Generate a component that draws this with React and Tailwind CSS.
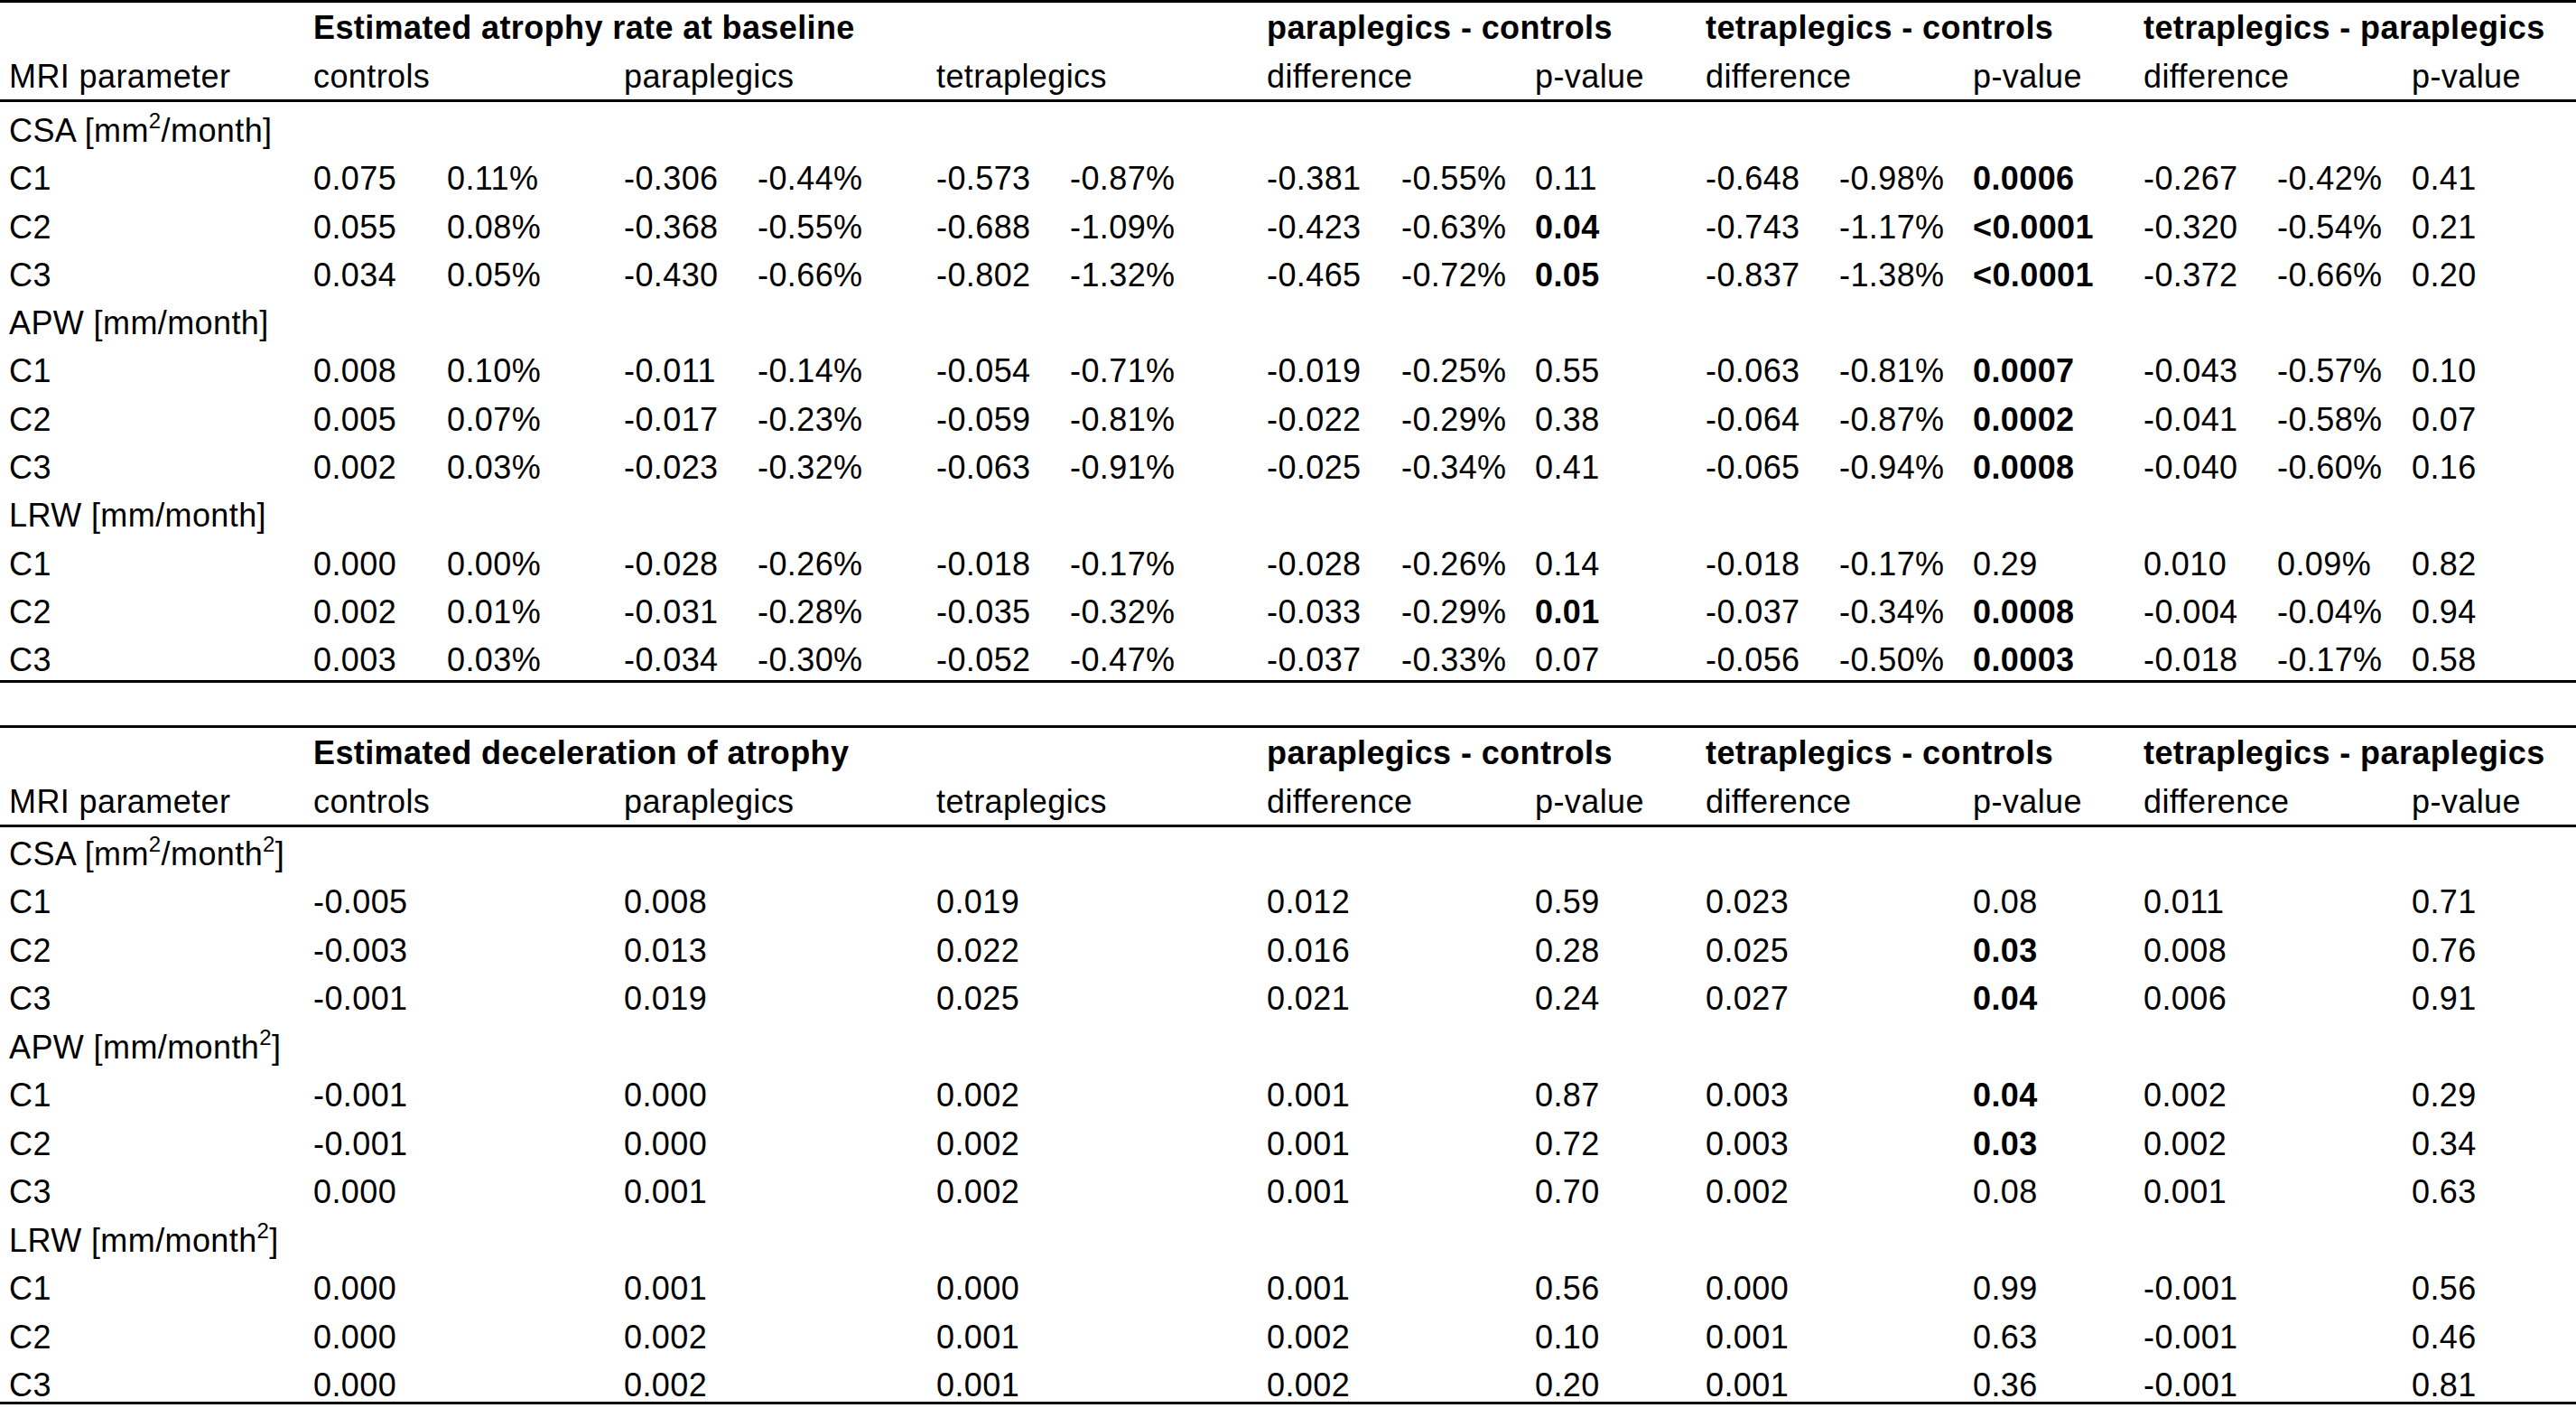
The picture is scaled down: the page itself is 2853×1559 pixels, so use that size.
import React from 'react';

// column grid shared by both tables: label + 15 value columns
const GRID =
  'grid grid-cols-[347px_148px_196px_148px_198px_148px_218px_149px_148px_189px_148px_148px_189px_148px_149px_1fr]';

const sq = <sup className="text-[24px] -top-[15px]">2</sup>;

const rateRows = [
  { label: 'CSA', unit: <>[mm{sq}/month]</> },
  { label: 'C1', v: ['0.075', '0.11%', '-0.306', '-0.44%', '-0.573', '-0.87%', '-0.381', '-0.55%', '0.11', '-0.648', '-0.98%', '*0.0006', '-0.267', '-0.42%', '0.41'] },
  { label: 'C2', v: ['0.055', '0.08%', '-0.368', '-0.55%', '-0.688', '-1.09%', '-0.423', '-0.63%', '*0.04', '-0.743', '-1.17%', '*<0.0001', '-0.320', '-0.54%', '0.21'] },
  { label: 'C3', v: ['0.034', '0.05%', '-0.430', '-0.66%', '-0.802', '-1.32%', '-0.465', '-0.72%', '*0.05', '-0.837', '-1.38%', '*<0.0001', '-0.372', '-0.66%', '0.20'] },
  { label: 'APW', unit: <>[mm/month]</> },
  { label: 'C1', v: ['0.008', '0.10%', '-0.011', '-0.14%', '-0.054', '-0.71%', '-0.019', '-0.25%', '0.55', '-0.063', '-0.81%', '*0.0007', '-0.043', '-0.57%', '0.10'] },
  { label: 'C2', v: ['0.005', '0.07%', '-0.017', '-0.23%', '-0.059', '-0.81%', '-0.022', '-0.29%', '0.38', '-0.064', '-0.87%', '*0.0002', '-0.041', '-0.58%', '0.07'] },
  { label: 'C3', v: ['0.002', '0.03%', '-0.023', '-0.32%', '-0.063', '-0.91%', '-0.025', '-0.34%', '0.41', '-0.065', '-0.94%', '*0.0008', '-0.040', '-0.60%', '0.16'] },
  { label: 'LRW', unit: <>[mm/month]</> },
  { label: 'C1', v: ['0.000', '0.00%', '-0.028', '-0.26%', '-0.018', '-0.17%', '-0.028', '-0.26%', '0.14', '-0.018', '-0.17%', '0.29', '0.010', '0.09%', '0.82'] },
  { label: 'C2', v: ['0.002', '0.01%', '-0.031', '-0.28%', '-0.035', '-0.32%', '-0.033', '-0.29%', '*0.01', '-0.037', '-0.34%', '*0.0008', '-0.004', '-0.04%', '0.94'] },
  { label: 'C3', v: ['0.003', '0.03%', '-0.034', '-0.30%', '-0.052', '-0.47%', '-0.037', '-0.33%', '0.07', '-0.056', '-0.50%', '*0.0003', '-0.018', '-0.17%', '0.58'] },
];

// deceleration table only fills value + p-value columns
const d = (c, p, t, pcD, pcP, tcD, tcP, tpD, tpP) => [c, '', p, '', t, '', pcD, '', pcP, tcD, '', tcP, tpD, '', tpP];

const decelRows = [
  { label: 'CSA', unit: <>[mm{sq}/month{sq}]</> },
  { label: 'C1', v: d('-0.005', '0.008', '0.019', '0.012', '0.59', '0.023', '0.08', '0.011', '0.71') },
  { label: 'C2', v: d('-0.003', '0.013', '0.022', '0.016', '0.28', '0.025', '*0.03', '0.008', '0.76') },
  { label: 'C3', v: d('-0.001', '0.019', '0.025', '0.021', '0.24', '0.027', '*0.04', '0.006', '0.91') },
  { label: 'APW', unit: <>[mm/month{sq}]</> },
  { label: 'C1', v: d('-0.001', '0.000', '0.002', '0.001', '0.87', '0.003', '*0.04', '0.002', '0.29') },
  { label: 'C2', v: d('-0.001', '0.000', '0.002', '0.001', '0.72', '0.003', '*0.03', '0.002', '0.34') },
  { label: 'C3', v: d('0.000', '0.001', '0.002', '0.001', '0.70', '0.002', '0.08', '0.001', '0.63') },
  { label: 'LRW', unit: <>[mm/month{sq}]</> },
  { label: 'C1', v: d('0.000', '0.001', '0.000', '0.001', '0.56', '0.000', '0.99', '-0.001', '0.56') },
  { label: 'C2', v: d('0.000', '0.002', '0.001', '0.002', '0.10', '0.001', '0.63', '-0.001', '0.46') },
  { label: 'C3', v: d('0.000', '0.002', '0.001', '0.002', '0.20', '0.001', '0.36', '-0.001', '0.81') },
];

function Cell({ text }) {
  if (text.startsWith('*')) return <div className="font-bold whitespace-nowrap">{text.slice(1)}</div>;
  return <div className="whitespace-nowrap">{text}</div>;
}

function Table({ title, rows, rowClass, lastRowClass }) {
  return (
    <div>
      <div className="h-[3px] bg-black" />
      <div className={`${GRID} h-[53px] pt-[8px] font-bold`}>
        <div />
        <div className="col-span-6 whitespace-nowrap">{title}</div>
        <div className="col-span-3 whitespace-nowrap">paraplegics - controls</div>
        <div className="col-span-3 whitespace-nowrap">tetraplegics - controls</div>
        <div className="col-span-3 whitespace-nowrap">tetraplegics - paraplegics</div>
      </div>
      <div className={`${GRID} h-[54px] pt-[9px]`}>
        <div className="pl-[10px] whitespace-nowrap">MRI parameter</div>
        <div className="col-span-2">controls</div>
        <div className="col-span-2">paraplegics</div>
        <div className="col-span-2">tetraplegics</div>
        <div className="col-span-2">difference</div>
        <div>p-value</div>
        <div className="col-span-2">difference</div>
        <div>p-value</div>
        <div className="col-span-2">difference</div>
        <div>p-value</div>
      </div>
      <div className="h-[3px] bg-black" />
      {rows.map((r, i) => (
        <div key={i} className={`${GRID} ${i === rows.length - 1 ? lastRowClass : rowClass}`}>
          <div className="pl-[10px] whitespace-nowrap">
            {r.label}
            {r.unit && <> {r.unit}</>}
          </div>
          {r.v && r.v.map((t, j) => <Cell key={j} text={t} />)}
        </div>
      ))}
      <div className="h-[3px] bg-black" />
    </div>
  );
}

export default function App() {
  return (
    <div className="w-[2853px] h-[1559px] overflow-hidden bg-white text-black font-['Liberation_Sans','Arial',sans-serif] text-[36px] leading-[40px] tracking-[0.4px]">
      <Table
        title="Estimated atrophy rate at baseline"
        rows={rateRows}
        rowClass="h-[53.3px] pt-[12px]"
        lastRowClass="h-[53.3px] pt-[12px]"
      />
      <div className="mt-[47px]">
        <Table
          title="Estimated deceleration of atrophy"
          rows={decelRows}
          rowClass="h-[53.5px] pt-[10px]"
          lastRowClass="h-[48px] pt-[10px]"
        />
      </div>
    </div>
  );
}
